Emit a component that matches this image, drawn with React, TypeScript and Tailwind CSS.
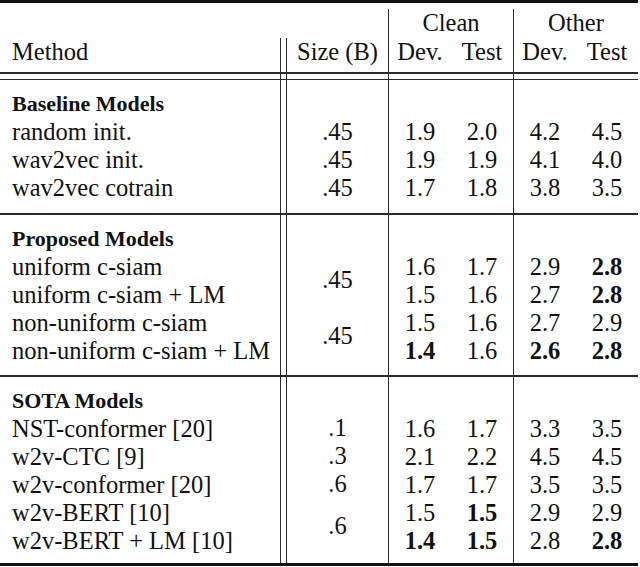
import React from 'react';

// column template shared by every band: Method | double rule | Size | Clean | Other
const GRID = 'grid grid-cols-[280px_7px_101px_125px_125px]';
const LINE = 'border-[#2a2a2a]';

type Row = {
  name: string;
  clean: [string, string];
  other: [string, string];
  bold?: boolean[]; // [cleanDev, cleanTest, otherDev, otherTest]
};

type SizeCell = { label: string; span: number };

const Num = ({ value, bold }: { value: string; bold?: boolean }) => (
  <div className={`h-[28px] leading-[28px] text-center ${bold ? 'font-bold' : ''}`}>{value}</div>
);

const Section = ({
  title,
  rows,
  sizes,
  pt,
  pb,
}: {
  title: string;
  rows: Row[];
  sizes: SizeCell[];
  pt: string;
  pb: string;
}) => (
  <div className={GRID}>
    <div className={`${pt} ${pb} pl-3`}>
      <div className="h-[28px] leading-[28px] font-bold text-[22px]">{title}</div>
      {rows.map((r) => (
        <div key={r.name} className="h-[28px] leading-[28px] whitespace-nowrap">
          {r.name}
        </div>
      ))}
    </div>
    <div className={`border-x-[1.5px] ${LINE}`} />
    <div className={`${pt} ${pb}`}>
      <div className="h-[28px]" />
      {sizes.map((s, i) => (
        <div
          key={i}
          className={`flex items-center justify-center ${s.span === 2 ? 'h-[56px]' : 'h-[28px]'}`}
        >
          {s.label}
        </div>
      ))}
    </div>
    <div className={`border-l-[1.5px] ${LINE} ${pt} ${pb}`}>
      <div className="h-[28px]" />
      {rows.map((r) => (
        <div key={r.name} className="grid grid-cols-2">
          <Num value={r.clean[0]} bold={r.bold?.[0]} />
          <Num value={r.clean[1]} bold={r.bold?.[1]} />
        </div>
      ))}
    </div>
    <div className={`border-l-[1.5px] ${LINE} ${pt} ${pb}`}>
      <div className="h-[28px]" />
      {rows.map((r) => (
        <div key={r.name} className="grid grid-cols-2">
          <Num value={r.other[0]} bold={r.bold?.[2]} />
          <Num value={r.other[1]} bold={r.bold?.[3]} />
        </div>
      ))}
    </div>
  </div>
);

const Rule = ({ thick }: { thick?: boolean }) => (
  <div className={thick ? 'h-[3px] bg-[#111]' : 'h-[1.5px] bg-[#2a2a2a]'} />
);

const baseline: Row[] = [
  { name: 'random init.', clean: ['1.9', '2.0'], other: ['4.2', '4.5'] },
  { name: 'wav2vec init.', clean: ['1.9', '1.9'], other: ['4.1', '4.0'] },
  { name: 'wav2vec cotrain', clean: ['1.7', '1.8'], other: ['3.8', '3.5'] },
];

const proposed: Row[] = [
  { name: 'uniform c-siam', clean: ['1.6', '1.7'], other: ['2.9', '2.8'], bold: [false, false, false, true] },
  { name: 'uniform c-siam + LM', clean: ['1.5', '1.6'], other: ['2.7', '2.8'], bold: [false, false, false, true] },
  { name: 'non-uniform c-siam', clean: ['1.5', '1.6'], other: ['2.7', '2.9'] },
  { name: 'non-uniform c-siam + LM', clean: ['1.4', '1.6'], other: ['2.6', '2.8'], bold: [true, false, true, true] },
];

const sota: Row[] = [
  { name: 'NST-conformer [20]', clean: ['1.6', '1.7'], other: ['3.3', '3.5'] },
  { name: 'w2v-CTC [9]', clean: ['2.1', '2.2'], other: ['4.5', '4.5'] },
  { name: 'w2v-conformer [20]', clean: ['1.7', '1.7'], other: ['3.5', '3.5'] },
  { name: 'w2v-BERT [10]', clean: ['1.5', '1.5'], other: ['2.9', '2.9'], bold: [false, true, false, false] },
  { name: 'w2v-BERT + LM [10]', clean: ['1.4', '1.5'], other: ['2.8', '2.8'], bold: [true, true, false, true] },
];

export default function App() {
  return (
    <div className="w-[640px] h-[567px] bg-white overflow-hidden">
      <div className="w-[638px] font-[family-name:'Liberation_Serif','Times_New_Roman',serif] text-[24.5px] text-[#111]">
        <Rule thick />
        <div className="h-[6px]" />

        {/* header row 1: group names */}
        <div className={`${GRID} h-[29px] leading-[28px]`}>
          <div />
          <div />
          <div />
          <div className={`border-l-[1.5px] ${LINE} text-center`}>Clean</div>
          <div className={`border-l-[1.5px] ${LINE} text-center`}>Other</div>
        </div>

        {/* header row 2: column names */}
        <div className={`${GRID} h-[34px] leading-[28px]`}>
          <div className="pl-3">Method</div>
          <div className={`border-x-[1.5px] ${LINE}`} />
          <div className="text-center">Size (B)</div>
          <div className={`border-l-[1.5px] ${LINE} grid grid-cols-2 content-start`}>
            <div className="text-center">Dev.</div>
            <div className="text-center">Test</div>
          </div>
          <div className={`border-l-[1.5px] ${LINE} grid grid-cols-2 content-start`}>
            <div className="text-center">Dev.</div>
            <div className="text-center">Test</div>
          </div>
        </div>

        {/* double rule */}
        <Rule />
        <div className={`${GRID} h-[5px]`}>
          <div />
          <div className={`border-x-[1.5px] ${LINE}`} />
          <div />
          <div className={`border-l-[1.5px] ${LINE}`} />
          <div className={`border-l-[1.5px] ${LINE}`} />
        </div>
        <Rule />

        <Section
          title="Baseline Models"
          rows={baseline}
          sizes={[
            { label: '.45', span: 1 },
            { label: '.45', span: 1 },
            { label: '.45', span: 1 },
          ]}
          pt="pt-[10px]"
          pb="pb-[11px]"
        />
        <Rule />
        <Section
          title="Proposed Models"
          rows={proposed}
          sizes={[
            { label: '.45', span: 2 },
            { label: '.45', span: 2 },
          ]}
          pt="pt-[10px]"
          pb="pb-[10.5px]"
        />
        <Rule />
        <Section
          title="SOTA Models"
          rows={sota}
          sizes={[
            { label: '.1', span: 1 },
            { label: '.3', span: 1 },
            { label: '.6', span: 1 },
            { label: '.6', span: 2 },
          ]}
          pt="pt-[10px]"
          pb="pb-[8.5px]"
        />
        <Rule thick />
      </div>
    </div>
  );
}
